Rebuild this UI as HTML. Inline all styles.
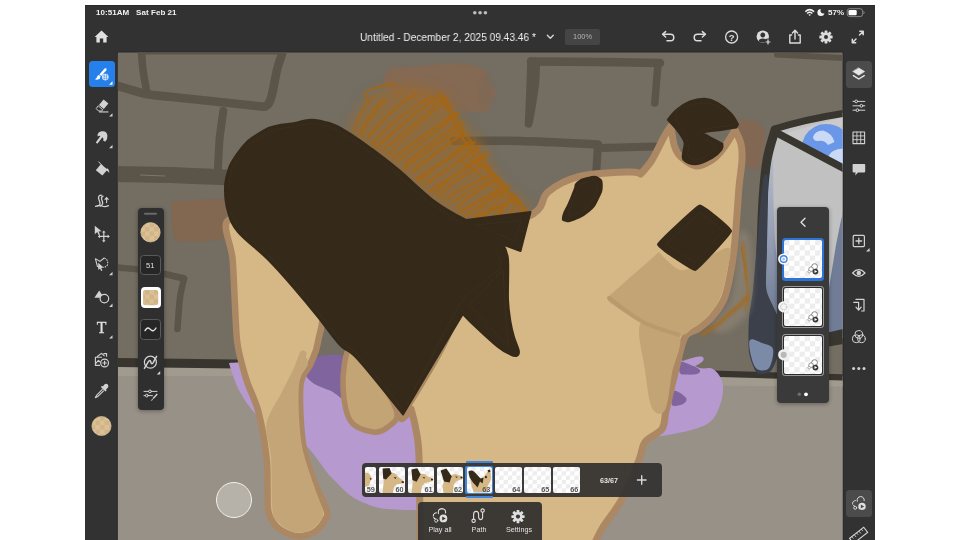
<!DOCTYPE html>
<html lang="en">
<head>
<meta charset="utf-8">
<title>Untitled - December 2, 2025 09.43.46</title>
<style>
html,body{margin:0;padding:0;background:#fff;}
body{width:960px;height:540px;position:relative;overflow:hidden;font-family:"Liberation Sans",sans-serif;color:#fff;}
#frame{position:absolute;left:85.4px;top:4.6px;width:789.45px;height:536px;background:#323232;border-top:1.2px solid #2a2a2a;box-sizing:border-box;}
#art{position:absolute;left:0;top:0;width:960px;height:540px;}
.abs{position:absolute;}
.txt{position:absolute;white-space:nowrap;line-height:1;will-change:transform;}
#status-l{left:96.3px;top:8.6px;font-size:8px;font-weight:bold;color:#f2f2f2;letter-spacing:0.05px;}
#status-pct{left:827.5px;top:8.6px;font-size:8px;font-weight:bold;color:#f2f2f2;}
#title{left:360.3px;top:31.6px;font-size:10.9px;color:#f0f0f0;transform:scaleX(0.931);transform-origin:0 0;}
#zoom{left:565px;top:29.3px;width:35px;height:15.4px;background:#454545;border-radius:2px;}
#zoomt{left:565px;width:35px;text-align:center;top:33.4px;font-size:7.4px;color:#b4b4b4;}
.panel{position:absolute;background:#303030;border-radius:4px;box-shadow:0 1px 4px rgba(0,0,0,.35);}
.tl{position:absolute;background:#3b3836;border-radius:4px;}
.fr{position:absolute;top:466.7px;height:26.3px;border-radius:1.5px;overflow:hidden;
 background-color:#fff;
 background-image:linear-gradient(45deg,#ececec 25%,transparent 25%,transparent 75%,#ececec 75%),linear-gradient(45deg,#ececec 25%,transparent 25%,transparent 75%,#ececec 75%);
 background-size:8.6px 8.6px;background-position:0 0,4.3px 4.3px;border-radius:2px;}
.fr b{position:absolute;right:1.5px;bottom:1px;font-size:6.6px;color:#444;font-weight:bold;line-height:1;}
.lbl{position:absolute;top:525.6px;font-size:8.1px;color:#e4e4e4;text-align:center;width:50px;line-height:1;transform:scaleX(0.89);}
.thumb{position:absolute;left:783.5px;width:38px;height:39px;border-radius:2px;
 background-color:#fff;
 background-image:linear-gradient(45deg,#ececec 25%,transparent 25%,transparent 75%,#ececec 75%),linear-gradient(45deg,#ececec 25%,transparent 25%,transparent 75%,#ececec 75%);
 background-size:10.4px 10.4px;background-position:5.2px 0,0 5.2px;}
</style>
</head>
<body>
<div id="frame"></div>

<svg id="art" viewBox="0 0 960 540" width="960" height="540">
<defs>
<clipPath id="cv"><rect x="117.8" y="52.6" width="724.8" height="488"/></clipPath>
<filter id="b6" x="-30%" y="-30%" width="160%" height="160%"><feGaussianBlur stdDeviation="6"/></filter>
<filter id="b3" x="-30%" y="-30%" width="160%" height="160%"><feGaussianBlur stdDeviation="3"/></filter>
<filter id="b1" x="-20%" y="-20%" width="140%" height="140%"><feGaussianBlur stdDeviation="1"/></filter>
</defs>
<rect x="116.8" y="51.6" width="726.8" height="489" fill="#2a2a2a"/>
<g clip-path="url(#cv)">
<rect x="117" y="52" width="727" height="488" fill="#736d62"/>
<polygon points="118,362 450,364 450,370 843,376 843,540 118,540" fill="#989187"/>
<polygon points="118,366 450,369 450,376 118,376" fill="#a19b8f"/>
<polygon points="450,372 843,377 843,386.5 450,384" fill="#a19b8f"/>
<polygon points="118,358 450,362 450,371 118,367" fill="#38352f"/>
<polygon points="450,363.2 843,374.2 843,380.6 450,369.4" fill="#38352f"/>
<g fill="none" stroke="#5b5449" stroke-linecap="round" stroke-linejoin="round">
<path d="M141.5,52 C141.8,55 142.1,63.2 143,70 C143.9,76.8 146.3,89.2 147,93" stroke-width="7.5"/>
<path d="M118,86 C122.7,87.3 137.3,92.2 146,94 C154.7,95.8 158.5,95.5 170,96.7 C181.5,98 200.2,99.9 215,101.5 C229.8,103.1 250.5,105.5 259,106.2 C267.5,107 264.2,106.9 266,106 C267.8,105.1 268.8,103.7 270,101 C271.2,98.3 271.8,95.2 273,90 C274.2,84.8 275.5,76 277,70 C278.5,64 281.2,56.7 282,54" stroke-width="8.6"/>
<path d="M141,53 C164.5,53 258.5,53 282,53" stroke-width="3"/>
<path d="M223.3,111 C222.9,113.8 221.6,123.2 221,128 C220.4,132.8 220,133.3 219.5,140 C219,146.7 218.2,163.3 218,168" stroke-width="8"/>
<path d="M118,174 C126.7,174.2 151.7,174.4 170,175 C188.3,175.6 218.3,177.1 228,177.5" stroke-width="16"/>
<path d="M118,267.5 C123.3,268.1 139,269.2 150,271 C161,272.8 178.3,277.2 184,278.5" stroke-width="6.5"/>
<path d="M184,279 C183.3,282.2 181.1,289.7 180,298 C178.9,306.3 177.9,323.8 177.5,329" stroke-width="6.5"/>
<path d="M531,61 C530.8,65.8 530.4,79.5 530,90 C529.6,100.5 528.8,118.3 528.5,124" stroke-width="7.5"/>
<path d="M537,66 C536.8,69.2 536.7,78.5 536,85 C535.3,91.5 534,98.8 533,105 C532,111.2 530.5,119.2 530,122" stroke-width="6"/>
<path d="M531,61.5 C542.2,61.6 576.5,61.8 598,62 C619.5,62.2 649.7,62.8 660,63" stroke-width="8.5"/>
<path d="M658,64 C657.8,67 657,75.5 656.5,82 C656,88.5 655.1,99.5 654.8,103" stroke-width="7.5"/>
<path d="M454,141 C465,141 496,140.4 520,141 C544,141.6 585,143.9 598,144.5" stroke-width="8.5"/>
<path d="M598,145 C597.8,147.5 597.3,155 597,160 C596.7,165 596.2,172.5 596,175" stroke-width="8"/>
<path d="M600,148 C609.2,147.8 645.8,146.8 655,146.5" stroke-width="8"/>
<path d="M777,54.5 C788,55.1 832,57.4 843,58" stroke-width="6"/>
</g>
<path d="M140,175 L165,176" stroke="#7d776b" stroke-width="1.2" fill="none"/>
<path d="M176,201.5 C184.3,200.1 213.7,198.8 222,199.5 C230.3,200.2 225.5,200.2 226,206 C226.5,211.8 226.3,228.3 225,234 C223.7,239.7 225.2,238.8 218,240 C210.8,241.2 189.5,242.5 182,241.5 C174.5,240.5 174.7,239.6 173,234 C171.3,228.4 171.5,213.4 172,208 C172.5,202.6 167.7,202.9 176,201.5Z" fill="#826751"/>
<circle cx="183.5" cy="220.5" r="1.6" fill="#7a6a5e"/>
<path d="M384,76 C384.7,72.3 387.7,69.5 392,68 C396.3,66.5 402,67.7 410,67 C418,66.3 429.7,64.3 440,64 C450.3,63.7 464.3,63.7 472,65 C479.7,66.3 483.3,68.8 486,72 C488.7,75.2 486.2,81 488,84 C489.8,87 496.3,87.7 497,90 C497.7,92.3 493.3,94.7 492,98 C490.7,101.3 492.3,107.7 489,110 C485.7,112.3 478.2,112.3 472,112 C465.8,111.7 459.8,109.3 452,108 C444.2,106.7 433.7,105.7 425,104 C416.3,102.3 406.2,100.3 400,98 C393.8,95.7 390.7,93.7 388,90 C385.3,86.3 383.3,79.7 384,76Z" fill="#846952" filter="url(#b1)"/>
<path d="M738,122 C739.3,118.5 745.7,118.8 748,119 C750.3,119.2 750.5,122.8 752,123 C753.5,123.2 755.5,119.5 757,120 C758.5,120.5 759.7,124 761,126 C762.3,128 764.7,128 765,132 C765.3,136 763.8,144.3 763,150 C762.2,155.7 762,163 760,166 C758,169 753.8,169 751,168 C748.2,167 744.8,164.7 743,160 C741.2,155.3 740.8,146.3 740,140 C739.2,133.7 736.7,125.5 738,122Z" fill="#826853" filter="url(#b1)"/>
<path d="M480,80 C481,75 486,74.7 488,76 C490,77.3 491.7,83.3 492,88 C492.3,92.7 491.7,101 490,104 C488.3,107 483.7,110 482,106 C480.3,102 479,85 480,80Z" fill="#7f6957" filter="url(#b1)" opacity="0.8"/>
<g id="scribble">
<path d="M352,140 C344,126 355.3,113 362,104 C368.7,95 378.8,88 392,86 C405.2,84 430,86 441,92 C452,98 451.2,112 458,122 C464.8,132 474.2,141.5 482,152 C489.8,162.5 497,175 505,185 C513,195 535.8,205.2 530,212 C524.2,218.8 490,230 470,226 C450,222 429.7,202.3 410,188 C390.3,173.7 360,154 352,140Z" fill="#a36a24" opacity="0.52" filter="url(#b6)"/>
<path d="M440,100 C443.3,99 461.7,119.3 470,128 C478.3,136.7 489.3,146 490,152 C490.7,158 480.7,167 474,164 C467.3,161 455.7,144.7 450,134 C444.3,123.3 436.7,101 440,100Z" fill="#a36a24" opacity="0.32" filter="url(#b6)"/>
<g fill="none" stroke="#a8660f" stroke-linecap="round" opacity="0.8">
<path d="M354.1,131.9 Q359.2,111.9 373.4,95.8" stroke-width="1.7"/>
<path d="M360.2,134.2 Q369.2,115.6 384.6,99" stroke-width="2.8"/>
<path d="M368.2,137.5 Q388.4,110.5 416.3,93.7" stroke-width="2.1"/>
<path d="M371.7,144.3 Q397.5,114.8 432.3,96.3" stroke-width="1.9"/>
<path d="M376.1,147.9 Q407.6,117.6 441.8,94.5" stroke-width="2.7"/>
<path d="M382.9,150.2 Q415.2,123.9 443.5,97.9" stroke-width="2"/>
<path d="M387.8,155.6 Q414.1,125.8 447.9,100.1" stroke-width="1.7"/>
<path d="M393.1,158.2 Q423.1,135 458.1,112.6" stroke-width="2.4"/>
<path d="M399.3,160.3 Q428.2,136.3 459.6,113.7" stroke-width="1.8"/>
<path d="M405.8,164 Q432.2,140.1 464.1,122" stroke-width="2.5"/>
<path d="M403.3,169.8 Q427.6,149.4 461.1,128.6" stroke-width="1.9"/>
<path d="M413.3,171 Q437.5,150.4 464.4,133" stroke-width="2.8"/>
<path d="M416.9,179.1 Q443.5,161.7 474.3,142.1" stroke-width="2.8"/>
<path d="M419.2,181.2 Q444,159.4 471.1,140.2" stroke-width="2"/>
<path d="M424.6,184.2 Q454.5,164.9 479.1,146.5" stroke-width="2.3"/>
<path d="M430,190.8 Q459.9,173.1 487.3,153.4" stroke-width="2.7"/>
<path d="M434.6,193.8 Q456.2,169.7 486.9,156.4" stroke-width="2"/>
<path d="M438.6,197.2 Q458.6,175.3 486.2,163.7" stroke-width="2.1"/>
<path d="M446.3,199.1 Q467.9,183.4 495.4,174.1" stroke-width="2.1"/>
<path d="M453.7,202.1 Q476.2,184.7 501,177.9" stroke-width="1.8"/>
<path d="M458.1,206.4 Q473.3,193.5 498.3,177.4" stroke-width="2.3"/>
<path d="M458.7,212.4 Q485.3,199.4 506.2,184.6" stroke-width="2.5"/>
<path d="M464.8,216.1 Q486.6,201.7 509.8,186.8" stroke-width="2.1"/>
<path d="M473.7,218.1 Q497.2,208.2 517.7,197.3" stroke-width="2.6"/>
<path d="M472.9,220 Q488.8,198.8 506.4,183.3" stroke-width="1.7"/>
<path d="M481.5,218.8 Q496.2,203.5 508.7,186.4" stroke-width="2.1"/>
<path d="M492.4,217.7 Q506.1,204.5 514.3,194.3" stroke-width="1.9"/>
<path d="M497.9,216.5 Q504.6,205.2 514.8,194.9" stroke-width="2.5"/>
<path d="M508.7,215.3 Q514.7,208.2 518.9,200.7" stroke-width="1.8"/>
<path d="M516.3,214.2 Q521.6,210.7 523.5,207.2" stroke-width="2.1"/>
<path d="M522.7,213 Q523.5,212.2 526.3,211" stroke-width="2.6"/>
<path d="M440,92 C442,96.3 447,108.3 452,118 C457,127.7 462.8,139.7 470,150 C477.2,160.3 485.5,169.8 495,180 C504.5,190.2 521.7,205.8 527,211" stroke-width="2.6"/>
<path d="M445,97 C447.8,102.2 455.8,117.8 462,128 C468.2,138.2 474.8,148 482,158 C489.2,168 498.3,180.3 505,188 C511.7,195.7 519.2,201.3 522,204" stroke-width="2.2"/>
<path d="M458,158 C461.7,160.8 473,169.3 480,175 C487,180.7 494.2,187 500,192 C505.8,197 512.5,202.8 515,205" stroke-width="2"/>
<path d="M470,160 C473.7,162 485,166 492,172 C499,178 508.7,192 512,196" stroke-width="2"/>
<path d="M367,101 C366.7,99.7 364.2,95 365,93 C365.8,91 368.7,90.3 372,89 C375.3,87.7 381,85.8 385,85 C389,84.2 394.2,84.2 396,84" stroke-width="2"/>
</g></g>
<g id="box">
<polygon points="774,128 843,113 843,338 778,352 760,372 752,345 760,200 768,150" fill="#c1c1c1"/>
<linearGradient id="bg1" gradientUnits="userSpaceOnUse" x1="0" y1="150" x2="0" y2="320"><stop offset="0" stop-color="#b6bccb"/><stop offset="0.45" stop-color="#9aa3b8"/><stop offset="1" stop-color="#6e7a94"/></linearGradient>
<path d="M770,150 C770.9,144.9 772.5,145.3 773,152 C773.5,158.7 773.2,188.3 773.5,200 C773.8,211.7 774.4,230 775,240 C775.6,250 777.5,260.3 778,275 C778.5,289.7 781.4,340 779,350 C776.6,360 762.3,363.3 760,350 C757.7,336.7 761.2,271.3 762,250 C762.8,228.7 764.9,203.3 766,190 C767.1,176.7 769.1,155.1 770,150Z" fill="url(#bg1)"/>
<polygon points="843,212 843,336 829,334 829,288 836,245 840,225" fill="#717c96"/>
<polygon points="779,135 843,168 843,117" fill="#cacaca"/>
<path d="M802.5,142 Q806,129 820,124.5 Q834,122.5 843,130 L843,167 L808,149Z" fill="#6b97e8"/>
<path d="M813,137 Q815,130.5 823,130.5 Q832,133 834.5,142 L828,145 Q824.5,139.5 817.5,141 Q813.5,141 813,137Z" fill="#c9d9f6"/>
<path d="M828,157 Q831,149 843,148.5 L843,166Z" fill="#c9d9f6"/>
<g fill="none" stroke="#38362f" stroke-linecap="round" stroke-linejoin="round">
<path d="M843,113.5 Q805,119.5 774.5,129" stroke-width="7"/>
<path d="M775,130 C773.7,135 769,148.3 767,160 C765,171.7 764,185 763,200 C762,215 761.5,233.3 761,250 C760.5,266.7 760.2,291.7 760,300" stroke-width="9"/>
<path d="M778,133.5 L843,168" stroke-width="7.5"/>
</g>
<path d="M763,180 C764.3,171.8 767.5,171.8 768,180 C768.5,188.2 767.2,237.2 767,250 C766.8,262.8 765.2,282.1 766.5,290 C767.8,297.9 776.5,311 778,318 C779.5,325 779.8,343.8 779,350 C778.2,356.2 773.6,368.3 771,371 C768.4,373.7 759.6,375.2 757,373 C754.4,370.8 749.9,358.4 749,352 C748.1,345.6 748.5,325.2 749,318 C749.5,310.8 752.1,297.9 753,290 C753.9,282.1 755.3,262.8 756.5,250 C757.7,237.2 761.7,188.2 763,180Z" fill="#3c404a"/>
<path d="M750,340 C751.8,337.8 758.2,341.5 762,343 C765.8,344.5 771.8,344.8 773,349 C774.2,353.2 771.7,364.7 769,368 C766.3,371.3 760,371 757,369 C754,367 752.2,360.8 751,356 C749.8,351.2 748.2,342.2 750,340Z" fill="#7b8aa6"/>
<polygon points="826,333 843,329 843,344 826,347" fill="#38362f"/>
</g>
<path d="M738,235 C741,225.7 747.7,230.8 750,240 C752.3,249.2 752.7,277.3 752,290 C751.3,302.7 750.5,309 746,316 C741.5,323 730.7,330.3 725,332 C719.3,333.7 710.8,332 712,326 C713.2,320 727.7,311.2 732,296 C736.3,280.8 735,244.3 738,235Z" fill="#958a78" opacity="0.55" filter="url(#b3)"/>
<path d="M743,243 C743.5,247.2 745.2,258.8 746,268 C746.8,277.2 748.2,291 748,298 C747.8,305 745.5,308 745,310" fill="none" stroke="#a56a1c" stroke-width="2" stroke-linecap="round" opacity="0.85" filter="url(#b1)"/>
<path d="M741,247 C741.5,249.5 743.2,256.5 744,262 C744.8,267.5 745.7,277 746,280" fill="none" stroke="#a56a1c" stroke-width="1.6" stroke-linecap="round" opacity="0.8"/>
<path d="M747,297 C745.7,298.5 742,303.2 739,306 C736,308.8 732.7,310.8 729,314 C725.3,317.2 721.3,321.7 717,325 C712.7,328.3 705.3,332.5 703,334" fill="none" stroke="#a56a1c" stroke-width="4" stroke-linecap="round" opacity="0.8" filter="url(#b1)"/>
<path d="M229,363 C229,363 294.2,360 326,359 C357.8,358 381,357.3 420,357 C459,356.7 520,357 560,357 C600,357 639.3,356.3 660,357 C680.7,357.7 677.3,359.2 684,361 C690.7,362.8 695.2,366.7 700,368 C704.8,369.3 709.3,366.8 713,369 C716.7,371.2 720.5,376.2 722,381 C723.5,385.8 723.5,391.7 722,398 C720.5,404.3 717.5,413.8 713,419 C708.5,424.2 703.5,426.2 695,429 C686.5,431.8 672.5,434.2 662,436 C651.5,437.8 642.3,432.7 632,440 C621.7,447.3 612,469.2 600,480 C588,490.8 591.7,500 560,505 C528.3,510 443,510.5 410,510 C377,509.5 375,507.3 362,502 C349,496.7 341.7,487.7 332,478 C322.3,468.3 315.7,453.7 304,444 C292.3,434.3 272.7,428.7 262,420 C251.3,411.3 245.5,401.5 240,392 C234.5,382.5 229,363 229,363Z" fill="#b599cf"/>
<path d="M682,362 C682.7,360.4 690.7,358.4 694,357.5 C697.3,356.6 700.4,356.4 702,356.8 C703.6,357.2 704,358.8 703.5,360 C703,361.2 701.2,362.8 699,364 C696.8,365.2 692.8,367.3 690,367 C687.2,366.7 681.3,363.6 682,362Z" fill="#b599cf"/>
<path d="M306,360 C312.7,357.5 337.2,350.7 344,357 C350.8,363.3 349.2,392.3 347,398 C344.8,403.7 336.7,393.5 331,391 C325.3,388.5 317.5,386.2 313,383 C308.5,379.8 305.2,375.8 304,372 C302.8,368.2 299.3,362.5 306,360Z" fill="#80649e"/>
<path d="M680,362 C682,360.8 688.7,364.2 692,365.5 C695.3,366.8 699.2,368.6 700,370 C700.8,371.4 699.3,373.2 697,374 C694.7,374.8 688.8,374.7 686,374.5 C683.2,374.3 681,375.1 680,373 C679,370.9 678,363.2 680,362Z" fill="#80649e"/>
<path d="M674,391 C676.3,389.8 684.5,395.8 686,398 C687.5,400.2 685.3,402.8 683,404 C680.7,405.2 673.5,407.2 672,405 C670.5,402.8 671.7,392.2 674,391Z" fill="#80649e"/>
<g id="dog">
<path d="M228.5,220 C220.6,225 231.5,243 232.7,260 C233.9,277 234.9,307.5 235.8,322 C236.7,336.5 236.2,337.3 238,347 C239.8,356.7 243.1,369.2 246.5,380 C249.9,390.8 255.2,399.2 258.5,412 C261.8,424.8 265,444 266.5,457 C268,470 267.2,480.8 267.5,490 C267.8,499.2 267.1,506 268.5,512 C269.9,518 272.4,522.2 276,526 C279.6,529.8 285.5,532.8 290,534.5 C294.5,536.2 298.7,536.6 303,536 C307.3,535.4 312.2,533.8 316,531 C319.8,528.2 323.8,522.5 325.5,519 C327.2,515.5 328.3,516.2 326.5,510 C324.7,503.8 318.4,493 314.5,482 C310.6,471 305.3,460.2 303,444 C300.7,427.8 299.2,398.3 300.5,385 C301.8,371.7 307.6,371.2 310.5,364 C313.4,356.8 316.4,352.7 318,342 C319.6,331.3 326.3,318.7 320,300 C313.7,281.3 295.2,243.3 280,230 C264.8,216.7 236.4,215 228.5,220Z" fill="#d5b886" stroke="#ab8863" stroke-width="6.5" stroke-linejoin="round"/>
<path d="M303,356 C305,355.7 308.7,359.2 308,364 C307.3,368.8 300.2,372.3 299,385 C297.8,397.7 299,424.7 301,440 C303,455.3 307.4,465.3 311,477 C314.6,488.7 321,502.7 322.5,510 C324,517.3 321.8,517.8 320,521 C318.2,524.2 315,527.1 312,529 C309,530.9 305.5,532.2 302,532.5 C298.5,532.8 294.8,532.6 291,531 C287.2,529.4 282.1,526.5 279,523 C275.9,519.5 273.8,521 272.5,510 C271.2,499 272,471.3 271,457 C270,442.7 264.7,434.8 266.5,424 C268.3,413.2 277.1,401.7 282,392 C286.9,382.3 292.5,372 296,366 C299.5,360 301,356.3 303,356Z" fill="#c4a577"/>
<path d="M303,354 C301.8,357 299.2,365 296,372 C292.8,379 288.2,387.7 284,396 C279.8,404.3 273.2,417.7 271,422" fill="none" stroke="#c4a577" stroke-width="7" stroke-linecap="round"/>
<path d="M348,350 C345.2,355 342.6,373.2 343,385 C343.4,396.8 345.5,413.2 350.5,421 C355.5,428.8 366.8,431 373,432 C379.2,433 384,430.2 388,427 C392,423.8 398.3,420.8 397,413 C395.7,405.2 386.2,389.7 380,380 C373.8,370.3 365.3,360 360,355 C354.7,350 350.8,345 348,350Z" fill="#c3a475" stroke="#ab8863" stroke-width="5.5" stroke-linejoin="round"/>
<path d="M403,414 C396.5,427.2 411,409 411,409 C411,409 414.7,422 416,430 C417.3,438 418.3,437.8 419,457 C419.7,476.2 420,545 420,545 C420,545 594,545 594,545 C594,545 598.3,534.7 603,527 C607.7,519.3 616,510.2 622,499 C628,487.8 635.2,469.5 639,460 C642.8,450.5 641.2,447.2 645,442 C648.8,436.8 658.5,434.2 662,429 C665.5,423.8 663.8,420.3 666,411 C668.2,401.7 671.8,385.3 675,373 C678.2,360.7 681.2,344.3 685,337 C688.8,329.7 693.5,332.3 698,329 C702.5,325.7 707.7,322 712,317 C716.3,312 721,305.8 724,299 C727,292.2 728.3,284.2 730,276 C731.7,267.8 732.8,260.2 734,250 C735.2,239.8 736.2,225.5 737,215 C737.8,204.5 738.2,196.2 739,187 C739.8,177.8 741.7,167.2 742,160 C742.3,152.8 742.2,149 741,144 C739.8,139 735,130 735,130 C735,130 726.8,144 723,149 C719.2,154 716.5,157.2 712,160 C707.5,162.8 701.2,166.5 696,166 C690.8,165.5 684.6,160.2 681,157 C677.4,153.8 676.3,151.7 674.6,146.5 C672.9,141.3 671,126 671,126 C671,126 667.7,130.3 664.5,136 C661.3,141.7 656,153.7 652,160 C648,166.3 640.6,174 640.6,174 C640.6,174 639.2,171.6 629,172 C618.8,172.4 593,173.1 579.5,176.4 C566,179.7 555.8,185.7 548,192 C540.2,198.3 546,206 533,214 C520,222 483.8,220.7 470,240 C456.2,259.3 461.2,301 450,330 C438.8,359 409.5,400.8 403,414Z" fill="#d5b886" stroke="#ab8863" stroke-width="7" stroke-linejoin="round"/>
<path d="M659,252 C659,252 608,297 608,297 C608,297 606.2,299.7 612,304 C617.8,308.3 631.8,317.8 643,323 C654.2,328.2 670.7,334.2 679,335 C687.3,335.8 688.2,331.2 693,328 C697.8,324.8 703.5,321 708,316 C712.5,311 717,304.7 720,298 C723,291.3 724.5,284.3 726,276 C727.5,267.7 733.3,250.3 729,248 C724.7,245.7 708.2,258.3 700,262 C691.8,265.7 686.8,271.7 680,270 C673.2,268.3 659,252 659,252Z" fill="#c3a475"/>
<path d="M641,323 C646.7,317.2 673.8,326.7 679,335 C684.2,343.3 674.3,360.5 672,373 C669.7,385.5 668.3,404.2 665,410 C661.7,415.8 655.3,414.7 652,408 C648.7,401.3 646.8,384.2 645,370 C643.2,355.8 635.3,328.8 641,323Z" fill="#c3a475"/>
<path d="M609,298 C614.7,302 631.3,315.8 643,322 C654.7,328.2 673,332.8 679,335" fill="none" stroke="#b8966a" stroke-width="4" stroke-linecap="round" opacity="0.8"/>
</g>
<g id="dark" fill="#35291a" stroke="#35291a" stroke-width="2" stroke-linejoin="round">
<path d="M225,187 C225.2,179.7 227.1,173.4 229,168 C230.9,162.6 233.6,158.9 236.7,154.4 C239.8,149.9 244.1,144.5 247.8,141 C251.5,137.5 255.3,135.6 259,133.3 C262.7,131.1 266.3,128.9 270,127.5 C273.7,126.1 276.8,125.5 281,124.7 C285.2,124 290.5,123.8 295,123 C299.5,122.2 303.8,120.4 308,120 C312.2,119.6 315.2,119.8 320,120.8 C324.8,121.8 331.1,123.3 336.7,125.8 C342.2,128.3 347.8,132.2 353.3,135.8 C358.9,139.4 362.5,141.9 370,147.5 C377.5,153.1 387.7,160.6 398.5,169.6 C409.3,178.6 423.4,192.9 434.7,201.3 C445.9,209.7 466,220 466,220 C466,220 530.5,212 530.5,212 C530.5,212 520.5,251 520.5,251 C520.5,251 503,244.5 503,244.5 C503,244.5 507.2,250.3 508,259.5 C508.8,268.7 507.6,289.1 508,299.5 C508.4,309.9 509.5,315.8 510.5,322 C511.5,328.2 512.6,332.2 514,337 C515.4,341.8 518.3,347.7 518.8,350.8 C519.3,353.9 518.2,355.2 516.8,355.8 C515.4,356.4 513.6,356 510.5,354.5 C507.4,353 504.7,352.4 498,347 C491.3,341.6 476.3,327.5 470.5,322 C464.7,316.5 463,314 463,314 C463,314 468,305.2 458,322 C448,338.8 403,414.5 403,414.5 C403,414.5 368.5,371.1 358,359.5 C347.5,347.9 346.7,352.1 340,345 C333.3,337.9 325.8,326.7 318,317 C310.2,307.3 301.3,296.6 293,287 C284.7,277.4 277.2,268.7 268,259.5 C258.8,250.3 244.7,239.9 238,232 C231.3,224.1 230.2,219.5 228,212 C225.8,204.5 224.8,194.3 225,187Z"/>
<path d="M577.8,182.2 C581.7,178.9 583.6,179 588.9,177.8 C594.2,176.6 594.4,175.7 597.8,177.8 C601.2,179.9 601.8,180 601.8,185.6 C601.8,191.2 601.2,192.1 597.8,198.9 C594.4,205.7 594.8,205.8 588.9,211.1 C583,216.4 581.8,216.3 575.6,218.9 C569.4,221.5 568.9,221.6 565.6,220.7 C562.3,219.8 562.4,220.2 563.3,215.6 C564.2,211 565.9,210.1 568.9,203.3 C571.9,196.5 572,195.6 574.4,190 C576.8,184.4 573.9,185.5 577.8,182.2Z"/>
<path d="M700,207 C701.9,206.6 729.6,229.4 729.5,231 C729.4,232.6 696.9,268.1 695,268.5 C693.1,268.9 659.4,246.1 659.5,244.5 C659.6,242.9 698.1,207.4 700,207Z" stroke-width="5"/>
<path d="M667.8,119.8 C667.8,119.8 673.3,112.6 677,109.6 C680.7,106.5 685.4,103.3 690,101.5 C694.6,99.7 700.2,98.5 704.8,98.7 C709.4,99 713.5,100.6 717.8,103 C722.1,105.4 727.3,109.7 730.7,113.3 C734.1,116.9 738,124.4 738,124.4 C738,124.4 736.3,127.4 736.3,127.4 C736.3,127.4 721.8,129.8 716,130.6 C710.2,131.4 701.5,132.4 701.5,132.4 C701.5,132.4 708.5,136.6 712,138.5 C715.5,140.4 722.4,144 722.4,144 C722.4,144 723.2,147.3 721.5,149.6 C719.8,151.9 716.5,155.4 712.2,157.8 C707.9,160.2 700.4,164 695.6,164.3 C690.8,164.6 685.5,162 683.5,159.6 C681.5,157.2 683.5,152.9 683.6,150 C683.8,147.1 685.5,145.3 684.4,142 C683.3,138.7 679.8,133.7 677,130 C674.2,126.3 667.8,119.8 667.8,119.8Z"/>
</g>
<g fill="none" stroke="#4a3c28" stroke-width="0.5" stroke-linejoin="round" opacity="0.6">
<path d="M476,225 L521,220.5 L515,241Z"/>
<path d="M469,304.5 L503,270 L508,346Z"/>
<path d="M495.5,249.5 C495.9,251.3 503.2,262.9 500,268 C496.8,273.1 470,290.8 463,300 C456,309.2 435.8,349.3 430,360 C424.2,370.7 407.9,402.3 405.5,407"/>
<path d="M228.5,187 C229.2,184 230.6,174.1 232.5,169 C234.4,163.9 237,160.7 240,156.5 C243,152.3 247,147.3 250.5,144 C254,140.7 257.5,138.9 261,136.8 C264.5,134.7 268,132.6 271.5,131.2 C275,129.8 278,129.2 282,128.4 C286,127.6 291.2,127.4 295.5,126.6 C299.8,125.8 304,124.1 308,123.8 C312,123.5 315,123.6 319.5,124.5 C324,125.4 329.8,127 335,129.4 C340.2,131.8 345.6,135.5 351,139 C356.4,142.5 360,144.8 367.5,150.5 C375,156.2 385.2,164 396,173 C406.8,182 420.7,196 432,204.5 C443.3,213 458.7,220.8 464,224"/>
<path d="M231,212 C232.7,215 234.5,222.5 241,230 C247.5,237.5 261,247.9 270,257 C279,266.1 286.7,274.9 295,284.5 C303.3,294.1 312.2,304.9 320,314.5 C327.8,324.1 335.3,334.9 342,342 C348.7,349.1 350,346 360,357 C370,368 395,399.5 402,408"/>
<path d="M676,112 C677.6,106.8 685.2,106.8 691,105 C696.8,103.2 699.8,102.8 705,103 C710.2,103.2 712.4,103.6 717,106 C721.6,108.4 724.8,111.4 728,115 C731.2,118.6 736.2,121.4 733,124 C729.8,126.6 718.8,126.4 712,128 C705.2,129.6 700.8,130 699,132 C697.2,134 699.6,135.2 703,138 C706.4,140.8 714.8,142.8 716,146 C717.2,149.2 713,151.2 709,154 C705,156.8 700.2,159.6 696,160 C691.8,160.4 689.5,159.2 688,156 C686.5,152.8 689.5,149 688.5,144 C687.5,139 685.5,137.4 683,131 C680.5,124.6 674.4,117.2 676,112Z"/>
<path d="M700,212 L723.5,231 L694.5,262.5 L666,244Z"/>
<path d="M580,185 C583.6,182.2 585.7,182.3 590,181.5 C594.3,180.7 594,180.5 596,182 C598,183.5 598,183 597.5,187 C597,191 597.1,191.4 594,197 C590.9,202.6 591.1,203.5 586,208 C580.9,212.5 579.7,212.1 575,214 C570.3,215.9 569.3,217.9 568.5,215 C567.7,212.1 569.9,209.1 572,203 C574.1,196.9 574.4,196.8 576.5,192 C578.6,187.2 576.4,187.8 580,185Z"/>
</g>
</g></svg>

<!-- status bar -->
<div class="txt" id="status-l">10:51AM&nbsp;&nbsp;&nbsp;Sat Feb 21</div>
<div class="txt" id="status-pct">57%</div>
<div class="txt" id="title">Untitled - December 2, 2025 09.43.46 *</div>
<div class="abs" id="zoom"></div>
<div class="txt" id="zoomt">100%</div>

<!-- left floating tool options panel -->
<div class="panel" style="left:137.5px;top:207.5px;width:26.5px;height:202.5px;background:#2f2f2f;"></div>
<div class="abs" style="left:140.3px;top:254.9px;width:20.6px;height:20.6px;border:0.8px solid #5a5a5a;border-radius:3.5px;background:#262626;box-sizing:border-box;"></div>
<div class="txt" style="left:140.3px;width:20.6px;text-align:center;top:261.6px;font-size:7.6px;color:#e0e0e0;">51</div>
<div class="abs" style="left:140.5px;top:287.3px;width:20.4px;height:20.6px;border-radius:4px;background:#fff;"></div>
<div class="abs" style="left:143.2px;top:290px;width:15px;height:15.2px;border-radius:2.5px;background:#dcc196;"></div>
<div class="abs" style="left:140.3px;top:319.2px;width:20.6px;height:20.6px;border:0.8px solid #5a5a5a;border-radius:3.5px;background:#262626;box-sizing:border-box;"></div>

<!-- right layers panel -->
<div class="panel" style="left:777px;top:207px;width:52px;height:195.5px;background:#3a3a3a;"></div>
<div class="abs" style="left:781.6px;top:238px;width:42.4px;height:42.6px;border-radius:3.5px;background:#2d74d6;"></div>
<div class="abs" style="left:781.6px;top:285.8px;width:42.4px;height:42.6px;border-radius:3.5px;background:#9a9a9a;"></div>
<div class="abs" style="left:781.6px;top:333.8px;width:42.4px;height:42.6px;border-radius:3.5px;background:#9a9a9a;"></div>
<div class="abs" style="left:782.6px;top:286.8px;width:40.4px;height:40.6px;border-radius:2.8px;background:#2b2b2b;"></div>
<div class="abs" style="left:782.6px;top:334.8px;width:40.4px;height:40.6px;border-radius:2.8px;background:#2b2b2b;"></div>
<div class="thumb" style="top:240.2px;left:783.8px;width:38px;height:38.2px;"></div>
<div class="thumb" style="top:288px;left:784px;width:37.6px;height:38px;"></div>
<div class="thumb" style="top:336px;left:784px;width:37.6px;height:38px;"></div>

<!-- timeline -->
<div class="tl" style="left:362.4px;top:462.9px;width:299.4px;height:34.4px;background:rgba(52,50,49,0.94);"></div>
<div class="abs" style="left:465.5px;top:461.3px;width:27.5px;height:37px;background:#3f86e0;border-radius:1px;"></div>
<div class="abs" style="left:465.5px;top:463.3px;width:27.5px;height:33.2px;background:#3e3a37;"></div>
<div class="abs" style="left:465.3px;top:465.8px;width:27.8px;height:28.2px;background:#3f86e0;border-radius:2px;"></div>
<div class="fr" style="left:365px;width:11.2px;"></div>
<div class="fr" style="left:378.7px;width:26.3px;"></div>
<div class="fr" style="left:407.8px;width:26.1px;"></div>
<div class="fr" style="left:436.8px;width:26.5px;"></div>
<div class="fr" style="left:466.7px;width:25px;top:467.2px;height:25.4px;"></div>
<div class="fr" style="left:495.3px;width:26.3px;"></div>
<div class="fr" style="left:524.3px;width:26.4px;"></div>
<div class="fr" style="left:553.2px;width:26.5px;"></div>
<div class="txt" style="left:588px;width:42px;text-align:center;top:476.8px;font-size:7.2px;font-weight:bold;color:#e6e6e6;">63/67</div>

<!-- bottom motion panel -->
<div class="tl" style="left:418px;top:502px;width:124px;height:44px;background:rgba(50,48,47,0.94);"></div>
<div class="lbl" style="left:415px;">Play all</div>
<div class="lbl" style="left:453.5px;">Path</div>
<div class="lbl" style="left:493.5px;">Settings</div>

<!-- touch shortcut -->
<div class="abs" style="left:216px;top:482px;width:36px;height:36px;border-radius:50%;background:#b6b2aa;border:1px solid #f2f0ec;box-sizing:border-box;"></div>

<!-- sidebars selected backgrounds -->
<div class="abs" style="left:88.5px;top:61.2px;width:26.6px;height:26.3px;border-radius:3.5px;background:#2680eb;"></div>
<div class="abs" style="left:845.5px;top:61px;width:26.5px;height:26.5px;border-radius:3.5px;background:#4b4b4b;"></div>
<div class="abs" style="left:845.5px;top:490px;width:26.5px;height:26.5px;border-radius:3.5px;background:#4b4b4b;"></div>

<svg class="abs" style="left:0;top:0" viewBox="0 0 960 540" width="960" height="540">
<defs>
<pattern id="chk" width="9" height="9" x="1" y="2" patternUnits="userSpaceOnUse"><rect width="9" height="9" fill="#dcc196"/><rect width="4.5" height="4.5" fill="#d1b588"/><rect x="4.5" y="4.5" width="4.5" height="4.5" fill="#d1b588"/></pattern>
</defs>
<g fill="#d2d2d2" stroke="none">
<!-- three dots top -->
<circle cx="474.8" cy="12.8" r="1.8" fill="#bcbcbc"/><circle cx="480.1" cy="12.8" r="1.8" fill="#bcbcbc"/><circle cx="485.4" cy="12.8" r="1.8" fill="#bcbcbc"/>
<!-- home -->
<path d="M101.5,30.6 L108.4,37 L106.6,37 L106.6,42.6 L103.2,42.6 L103.2,38.6 L99.8,38.6 L99.8,42.6 L96.4,42.6 L96.4,37 L94.6,37Z" fill="#e0e0e0"/>
<!-- chevron -->
<path d="M547.3,35.3 L550.3,38.3 L553.3,35.3" fill="none" stroke="#d8d8d8" stroke-width="1.3" stroke-linecap="round" stroke-linejoin="round"/>
<!-- undo -->
<g fill="none" stroke="#dcdcdc" stroke-width="1.5" stroke-linecap="round" stroke-linejoin="round">
<path d="M663,34.3 L670.5,34.3 Q673.8,34.3 673.8,37.5 Q673.8,40.8 670.5,40.8 L667,40.8"/>
<path d="M665.6,31.6 L662.6,34.3 L665.6,37"/>
<path d="M705,34.3 L697.5,34.3 Q694.2,34.3 694.2,37.5 Q694.2,40.8 697.5,40.8 L701,40.8"/>
<path d="M702.4,31.6 L705.4,34.3 L702.4,37"/>
<!-- help -->
<circle cx="731.6" cy="37" r="6" stroke-width="1.3"/>

<!-- share -->
<path d="M791.6,35 L789.8,35 L789.8,43 L800.2,43 L800.2,35 L798.4,35" stroke-width="1.4"/>
<path d="M795,39 L795,30.5 M792.4,33 L795,30.3 L797.6,33" stroke-width="1.4"/>
<!-- expand -->
<path d="M859.5,35 L863,31.5 M859.8,31.3 L863.2,31.3 L863.2,34.7" stroke-width="1.5"/>
<path d="M856,39 L852.5,42.5 M852.3,39.3 L852.3,42.7 L855.7,42.7" stroke-width="1.5"/>
</g>
<text x="731.6" y="40.6" font-family="Liberation Sans, sans-serif" font-size="9.6" font-weight="bold" fill="#dcdcdc" text-anchor="middle">?</text>
<!-- user + -->
<circle cx="762.8" cy="36.6" r="6.2" fill="#dcdcdc"/>
<path d="M762.8,32.4 a2.4,2.6 0 1,0 0.01,0Z M758.6,41.2 Q759,38.4 762.8,38.4 Q766.6,38.4 767,41.2 Q765,42.6 762.8,42.6 Q760.6,42.6 758.6,41.2Z" fill="#323232"/>
<circle cx="768" cy="42" r="3.4" fill="#323232"/>
<path d="M768,39.6 L768,44.4 M765.6,42 L770.4,42" stroke="#dcdcdc" stroke-width="1.2" fill="none"/>
<!-- gear top -->
<g transform="translate(826,37)" fill="#dcdcdc">
<g id="gear"><circle r="4.6"/>
<g id="teeth"><rect x="-1.4" y="-6.6" width="2.8" height="13.2" rx="0.5"/><rect x="-1.4" y="-6.6" width="2.8" height="13.2" rx="0.5" transform="rotate(45)"/><rect x="-1.4" y="-6.6" width="2.8" height="13.2" rx="0.5" transform="rotate(90)"/><rect x="-1.4" y="-6.6" width="2.8" height="13.2" rx="0.5" transform="rotate(135)"/></g></g>
<circle r="2" fill="#323232"/>
</g>
<!-- wifi -->
<g fill="none" stroke="#f2f2f2" stroke-width="1.5" stroke-linecap="butt">
<path d="M805.3,11.7 Q809.7,7.6 814.1,11.7"/>
<path d="M807.1,13.5 Q809.7,11.1 812.3,13.5"/>
</g>
<path d="M808.4,14.7 L809.7,16.1 L811,14.7 Q809.7,13.6 808.4,14.7Z" fill="#f2f2f2"/>
<!-- moon -->
<circle cx="820.9" cy="12.4" r="3.5" fill="#f2f2f2"/>
<circle cx="823.5" cy="10.5" r="3" fill="#323232"/>
<!-- battery -->
<rect x="847.2" y="8.7" width="15.4" height="7.9" rx="2.4" fill="none" stroke="#8e8e8e" stroke-width="0.9"/>
<rect x="848.5" y="10" width="8.2" height="5.3" rx="1.3" fill="#fff"/>
<path d="M863.6,11.4 Q864.8,12.65 863.6,13.9" fill="none" stroke="#8e8e8e" stroke-width="1"/>

<!-- LEFT SIDEBAR -->
<!-- brush -->
<g fill="#fff">
<path d="M104.6,68.6 Q105.8,67.8 106.4,68.6 Q107,69.4 106.2,70.4 L101.2,76 L99.4,74.4Z"/>
<path d="M98.8,75 L100.6,76.6 Q100.4,79.2 97.8,79.6 Q96,79.8 94.9,79.2 Q96.8,78.6 97,77 Q97.2,75.4 98.8,75Z"/>
<circle cx="105.3" cy="77.1" r="3.3"/>
<path d="M102.2,76 L108.4,76 M102.2,78.2 L108.4,78.2 M104.2,74 L104.2,80.2 M106.4,74 L106.4,80.2" stroke="#2680eb" stroke-width="0.55" fill="none"/>
<path d="M112.5,81.3 L112.5,84.7 L109.1,84.7Z"/>
</g>
<!-- eraser -->
<g fill="#d2d2d2">
<path d="M103.6,99.4 L108.4,103.4 L103.8,109 L99,105Z"/>
<path d="M98.2,105.8 L102.8,109.8 L101.6,111 L98.6,111 L96.2,108.6Z" fill="none" stroke="#d2d2d2" stroke-width="1"/>
<rect x="99" y="111.4" width="9.4" height="1.1"/>
<path d="M112.5,113.2 L112.5,116.6 L109.1,116.6Z"/>
<!-- smudge -->
<path d="M97.6,136.4 Q97,132 101.6,131.2 Q106.8,130.6 107.4,135.4 Q107.8,139 105.4,141.4 L103.4,141 Q103.8,138 102.4,137.2 L97.4,143.8 L95.8,142.6 L100.4,136 Q99,135.6 97.6,136.4Z"/>
<path d="M112.5,144.8 L112.5,148.2 L109.1,148.2Z"/>
<!-- fill bucket -->
<path d="M100.8,164.2 L107.6,169.4 L102.4,175.4 L95.8,170.2Z"/>
<path d="M98.4,161.6 L103,166.4" fill="none" stroke="#d2d2d2" stroke-width="1"/>
<path d="M107,168.2 Q109.6,169.6 109.2,173 Q108.4,171.4 106.4,170.6Z"/>
<!-- liquify -->
<g fill="none" stroke="#d2d2d2" stroke-width="1.3" stroke-linecap="round">
<path d="M101.4,195.2 Q98,195.4 98.6,198.6 Q99.6,201.4 100,203 Q100.4,205.4 97.4,205.8"/>
<path d="M103,196.2 Q101,197 101.6,199.2 Q102.8,202 102.6,203.6 Q102.2,205.4 100.4,206"/>
<path d="M95.6,206.4 Q99,205 102,206 Q105,207.4 108.4,205.6"/>
<path d="M106.6,202.6 L106.6,198 M105,199.4 L106.6,197.6 L108.2,199.4" stroke-width="1.1"/>
</g>
<!-- move -->
<path d="M94.8,225.8 L94.8,234.2 L97.2,232 L98.6,235 L100,234.4 L98.6,231.4 L101.6,231.2Z"/>
<g fill="none" stroke="#d2d2d2" stroke-width="1.2">
<path d="M103.8,232 L103.8,240.8 M99.4,236.4 L108.2,236.4"/>
</g>
<path d="M103.8,230.4 L105.6,232.6 L102,232.6Z M103.8,242.4 L105.6,240.2 L102,240.2Z M97.8,236.4 L100,234.6 L100,238.2Z M109.8,236.4 L107.6,234.6 L107.6,238.2Z"/>
<!-- lasso select -->
<path d="M95.4,258.6 L100,261.4 L104.2,258 " fill="none" stroke="#d2d2d2" stroke-width="1.1"/>
<path d="M104.2,258 Q108.4,259.6 107.6,264.4 Q106.6,267.4 102.6,267.2" fill="none" stroke="#d2d2d2" stroke-width="1.1" stroke-dasharray="1.6 1"/>
<path d="M95.4,258.6 L97.4,266.4 L102,267.4" fill="none" stroke="#d2d2d2" stroke-width="1.1"/>
<path d="M98.2,262.8 L98.2,270 L100,268.4 L101.2,271 L102.4,270.4 L101.2,267.8 L103.6,267.6Z"/>
<path d="M112.5,271.8 L112.5,275.2 L109.1,275.2Z"/>
<!-- shapes -->
<path d="M99.2,290.4 L104,297.8 L94.4,297.8Z"/>
<circle cx="104.4" cy="298.6" r="4.3" fill="#323232" stroke="#d2d2d2" stroke-width="1.2"/>
<path d="M112.5,303.6 L112.5,307.0 L109.1,307.0Z"/>
<!-- T -->
<text x="101.5" y="333.4" font-family="Liberation Serif, serif" font-size="15.8" fill="#dedede" text-anchor="middle" stroke="#dedede" stroke-width="0.35">T</text>
<path d="M112.5,335.2 L112.5,338.6 L109.1,338.6Z"/>
<!-- place image -->
<g fill="none" stroke="#d2d2d2" stroke-width="1.1" stroke-linejoin="round">
<path d="M102,357.2 L95.4,357.2 L95.4,365.4 L100,365.4"/>
<path d="M95.6,363.6 L98.4,360.4 L100.4,362.4"/>
<path d="M97,356.8 L101.4,353.4 L104.6,356.2 M103.4,353.6 L106.6,353.6 L106.6,356.8"/>
<circle cx="104.6" cy="363" r="3.9" stroke-width="1.2"/>
<path d="M104.6,360.8 L104.6,365.2 M102.4,363 L106.8,363" stroke-width="1.2"/>
</g>
<!-- eyedropper -->
<path d="M104.4,384.6 Q106.2,383 107.8,384.6 Q109.2,386.2 107.6,388 L106,389.6 L106.6,390.4 L105.4,391.6 L100.8,387 L102,385.8 L102.8,386.4Z"/>
<path d="M102.6,389.2 L97,394.8 Q95.8,396 95.4,397.6 Q97,397.4 98.2,396.2 L103.8,390.6" fill="none" stroke="#d2d2d2" stroke-width="1.1" stroke-linejoin="round"/>
</g>
<!-- colour chips -->
<circle cx="101.5" cy="426" r="9.6" fill="url(#chk)" stroke="#e8d2a8" stroke-width="0.6"/>
<circle cx="150.5" cy="232.3" r="9.7" fill="url(#chk)" stroke="#e8d2a8" stroke-width="0.6"/>
<rect x="143.2" y="290" width="15" height="15.2" rx="2.5" fill="url(#chk)"/>
<rect x="144" y="212.8" width="13" height="2" rx="1" fill="#6a6a6a"/>
<!-- wave -->
<path d="M145,330.6 Q147.6,326 150.4,329.4 Q153.2,332.8 156,328" fill="none" stroke="#e6e6e6" stroke-width="1.4" stroke-linecap="round"/>
<!-- smoothing icon -->
<g fill="none" stroke="#d2d2d2" stroke-width="1.2" stroke-linecap="round">
<circle cx="150.4" cy="362.2" r="6"/>
<path d="M144.4,368.4 L148.4,361.6 Q150,359 150.8,362 Q151.6,365 153.2,362.6 L156.6,356.4" stroke-width="1.5"/>
</g>
<path d="M160.2,371 L160.2,374.4 L156.8,374.4Z" fill="#d2d2d2"/>
<!-- brush settings -->
<g fill="none" stroke="#d2d2d2" stroke-width="1" stroke-linecap="round">
<path d="M144,391.4 L148.6,391.4 M151.4,391.4 L157,391.4 M144,395.6 L145.4,395.6 M148.2,395.6 L152.4,395.6"/>
<circle cx="150" cy="391.4" r="1.4"/><circle cx="146.8" cy="395.6" r="1.4"/>
</g>
<path d="M156.8,393.6 L157.8,394.6 L153.6,399 L152.6,398Z M152.2,398.6 L153,399.4 Q152.4,400.8 150.6,400.8 Q151.8,400 152.2,398.6Z" fill="#d2d2d2"/>

<!-- RIGHT SIDEBAR -->
<g fill="none" stroke="#d2d2d2" stroke-width="1.2" stroke-linejoin="round" stroke-linecap="round">
<!-- layers -->
<path d="M858.8,68 L864.6,71.6 L858.8,75.2 L853,71.6Z" fill="#e6e6e6" stroke="#e6e6e6" stroke-width="0.6"/>
<path d="M853.4,75.6 L858.8,79 L864.2,75.6" stroke="#e6e6e6" stroke-width="1.4"/>
<!-- sliders -->
<path d="M853,101.4 L854.8,101.4 M857.6,101.4 L864.8,101.4 M853,105.8 L860,105.8 M862.8,105.8 L864.8,105.8 M853,110.2 L856,110.2 M858.8,110.2 L864.8,110.2" stroke-width="1"/>
<circle cx="856.2" cy="101.4" r="1.4" stroke-width="1"/><circle cx="861.4" cy="105.8" r="1.4" stroke-width="1"/><circle cx="857.4" cy="110.2" r="1.4" stroke-width="1"/>
<!-- grid -->
<rect x="853" y="132" width="11.6" height="11.6" stroke-width="1.1"/>
<path d="M856.9,132 L856.9,143.6 M860.7,132 L860.7,143.6 M853,135.9 L864.6,135.9 M853,139.7 L864.6,139.7" stroke-width="0.9"/>
<!-- add layer -->
<rect x="853.2" y="235.4" width="11.2" height="11.2" rx="1" stroke-width="1.2"/>
<path d="M858.8,238.2 L858.8,243.8 M856,241 L861.6,241" stroke-width="1.3"/>
<!-- eye -->
<path d="M852.6,273 Q858.8,266.4 865,273 Q858.8,279.6 852.6,273Z" stroke-width="1.2"/>
<!-- import -->
<path d="M856,299.4 L864,299.4 L864,311 L861.6,311" stroke-width="1.2"/>
<path d="M853.8,302.4 L858.6,302.4 L858.6,309.4 M856,307.2 L858.6,310.2 L861.2,307.2" stroke-width="1.2"/>
<!-- three circles -->
<circle cx="858.8" cy="334.4" r="3.9" stroke-width="1"/><circle cx="856.2" cy="338.8" r="3.9" stroke-width="1"/><circle cx="861.4" cy="338.8" r="3.9" stroke-width="1"/>
<!-- chevron left (layers panel) -->
<path d="M805,218.2 L801,222.2 L805,226.2" stroke="#e0e0e0" stroke-width="1.4"/>
</g>
<circle cx="858.8" cy="273" r="2.3" fill="#d2d2d2"/>
<!-- comment -->
<path d="M853.4,164 L864.4,164 Q865.2,164 865.2,164.8 L865.2,171.6 Q865.2,172.4 864.4,172.4 L858,172.4 L855.2,175.6 L855.6,172.4 L853.4,172.4 Q852.6,172.4 852.6,171.6 L852.6,164.8 Q852.6,164 853.4,164Z" fill="#d2d2d2"/>
<path d="M869.6,248 L869.6,251.6 L866,251.6Z" fill="#d2d2d2"/>
<!-- more dots -->
<circle cx="853.6" cy="368.4" r="1.5" fill="#d2d2d2"/><circle cx="858.8" cy="368.4" r="1.5" fill="#d2d2d2"/><circle cx="864" cy="368.4" r="1.5" fill="#d2d2d2"/>
<!-- motion icon (sidebar) -->
<g id="motion" fill="none" stroke="#e0e0e0" stroke-width="1" stroke-linecap="round">
<path d="M857.2,501.2 Q856.6,497 860.6,496.6 Q864.4,496.8 864.2,500.6"/>
<path d="M855.4,500.6 Q852.4,501 852.6,503.8 Q852.8,505.6 854.4,506" stroke-dasharray="1.8 1.2"/>
<circle cx="855.2" cy="507.8" r="1.5" stroke-width="0.9"/>
</g>
<circle cx="862" cy="506.4" r="3.7" fill="#e0e0e0"/>
<path d="M860.8,504.4 L864.2,506.4 L860.8,508.4Z" fill="#4b4b4b"/>
<!-- ruler -->
<g transform="translate(858.6,535.4) rotate(-38)">
<rect x="-9" y="-3.2" width="18" height="6.4" fill="none" stroke="#d2d2d2" stroke-width="1.1"/>
<path d="M-6,-3.2 L-6,-0.8 M-3,-3.2 L-3,-0.2 M0,-3.2 L0,-0.8 M3,-3.2 L3,-0.2 M6,-3.2 L6,-0.8" stroke="#d2d2d2" stroke-width="0.8" fill="none"/>
</g>
<!-- layer radio + page dots -->
<circle cx="783.7" cy="259" r="5.6" fill="#fff"/><circle cx="783.7" cy="259" r="3.3" fill="none" stroke="#3f86e0" stroke-width="1.4"/><circle cx="783.6" cy="259" r="1.5" fill="#a6c6f2"/>
<circle cx="783.7" cy="306.8" r="5.6" fill="#f4f4f4"/><circle cx="783.7" cy="306.8" r="3.1" fill="none" stroke="#c0c0c0" stroke-width="1.1" stroke-dasharray="1.1 0.7"/>
<circle cx="783.7" cy="354.8" r="5.6" fill="#f0f0f0"/><circle cx="783.7" cy="354.8" r="3.1" fill="#b9b9b9"/>
<circle cx="799.3" cy="394.3" r="1.7" fill="#6e6e6e"/><circle cx="806" cy="394.3" r="1.9" fill="#fff"/>
<!-- layer thumb motion icons -->
<g id="lm1">
<circle cx="814.6" cy="266.6" r="2.9" fill="#fff" stroke="#6a6a6a" stroke-width="0.8"/>
<circle cx="811" cy="269.2" r="2.3" fill="#fff" stroke="#7a7a7a" stroke-width="0.8"/>
<circle cx="809.2" cy="271.7" r="1.3" fill="#fff" stroke="#8a8a8a" stroke-width="0.7"/>
<circle cx="815.4" cy="271.6" r="2.9" fill="#3a3a3a"/>
<path d="M814.5,270.1 L817.2,271.6 L814.5,273.1Z" fill="#fff"/>
</g>
<use href="#lm1" y="48"/>
<use href="#lm1" y="96"/>

<!-- timeline thumbnails -->
<g id="thumbs">
<!-- 59 -->
<path d="M365,473 Q369,472 370.5,476 L372,479 L370.5,481 L369,486 L365,487Z" fill="#d5b886"/>
<path d="M369.5,477.5 L371.6,478.8 L370.6,480Z" fill="#35291a"/>
<!-- 60 -->
<path d="M383.5,475 L392,472.5 Q396,473 398,476.5 L404,481.5 Q404.6,483.4 402,483.6 L396.5,484.4 L394,487 L393,493 L382.5,493 L383.5,484Z" fill="#d5b886"/>
<path d="M382.6,468.4 L389.6,468 L391.6,473.4 L386,479.6 L383.2,478.6Z" fill="#35291a"/>
<path d="M393.6,477 L396.6,477.6 L395.4,479Z M401.8,481 L404.2,481.6 L403.4,483.2 L401.6,482.8Z" fill="#35291a"/>
<!-- 61 -->
<path d="M412.5,476 L420,473.6 Q425,473.4 427,476 L433,478.4 Q433.8,481 431.4,481.6 L425,483 L422,486 L421,493 L411.5,493 L412.5,485Z" fill="#d5b886"/>
<path d="M411.4,469.4 L417.4,468.2 L420.6,474.4 L416.6,481.8 L412.4,480Z" fill="#35291a"/>
<path d="M422.4,477 L425.2,477.4 L424.2,478.8Z M431,478.4 L433.2,479 L432.6,480.6 L431,480.2Z" fill="#35291a"/>
<!-- 62 -->
<path d="M444.5,479 L450,476 Q454,473.4 457,474.4 L462.4,476.4 Q463,479 460.6,479.6 L456,481.4 L453.6,485 L453,493 L443.5,493 L442.5,486Z" fill="#d5b886"/>
<path d="M440.6,470.6 L446.4,468.6 L451.6,476.2 L449.6,482.4 L444,481.4Z" fill="#35291a"/>
<path d="M455,476.4 L457.6,476.8 L456.8,478Z M460.6,476.6 L462.6,477 L462.2,478.4 L460.6,478.2Z" fill="#35291a"/>
<!-- 63 -->
<path d="M470.4,479 L480,481 L484.6,476 L488.4,470.6 L491,473 L490.6,481 L487.6,486 L488,492.6 L473.6,492.6 L471.6,486Z" fill="#d5b886"/>
<path d="M468.4,471.6 Q471,469.6 474,471.6 L480.6,478.6 L483.6,477.4 L482.6,483.6 L480,481.6 L477.6,487.6 L473,482.6 L469.6,477.6Z" fill="#35291a"/>
<path d="M487.4,470.2 L489.8,469.6 L490.6,471.8 L488.6,472.4Z M485.6,475.6 L487.4,477 L486,478.4 L484.6,477.2Z" fill="#35291a"/>
</g>
<g font-family="Liberation Sans, sans-serif" font-size="7.3" font-weight="bold" fill="#585858" text-anchor="end">
<text x="374.9" y="491.6">59</text>
<text x="403.7" y="491.6">60</text>
<text x="432.6" y="491.6">61</text>
<text x="462.0" y="491.6">62</text>
<text x="490.4" y="491.6">63</text>
<text x="520.3" y="491.6">64</text>
<text x="549.4" y="491.6">65</text>
<text x="578.4" y="491.6">66</text>
</g>
<!-- timeline plus -->
<path d="M641.7,475.2 L641.7,484.8 M636.9,480 L646.5,480" stroke="#d8d8d8" stroke-width="1.4" fill="none"/>
<!-- bottom panel icons -->
<g fill="none" stroke="#e0e0e0" stroke-width="1.1" stroke-linecap="round">
<path d="M438.4,513.6 Q437.6,509 441.8,508.6 Q446,508.8 445.6,513"/>
<path d="M436.4,512.8 Q433,513.4 433.4,516.4 Q433.6,518.4 435.4,518.8" stroke-dasharray="1.8 1.3"/>
<circle cx="436.2" cy="520.6" r="1.6" stroke-width="0.9"/>
<!-- path icon -->
<circle cx="473.6" cy="520.8" r="1.7"/><circle cx="482.6" cy="510.6" r="1.7"/>
<path d="M473.6,519 L473.6,514.4 Q473.6,511.4 476.2,511.4 Q478.6,511.4 478.6,514.4 L478.6,516.8 Q478.6,519.6 480.8,519.6 Q482.6,519.4 482.6,517 L482.6,512.6"/>
</g>
<circle cx="443.4" cy="518.4" r="3.9" fill="#e0e0e0"/>
<path d="M442.2,516.4 L445.8,518.4 L442.2,520.4Z" fill="#3a3836"/>
<g transform="translate(518,516.6)" fill="#e0e0e0"><use href="#gear"/><circle r="2.1" fill="#3a3836"/></g>
</svg>



</body>
</html>
